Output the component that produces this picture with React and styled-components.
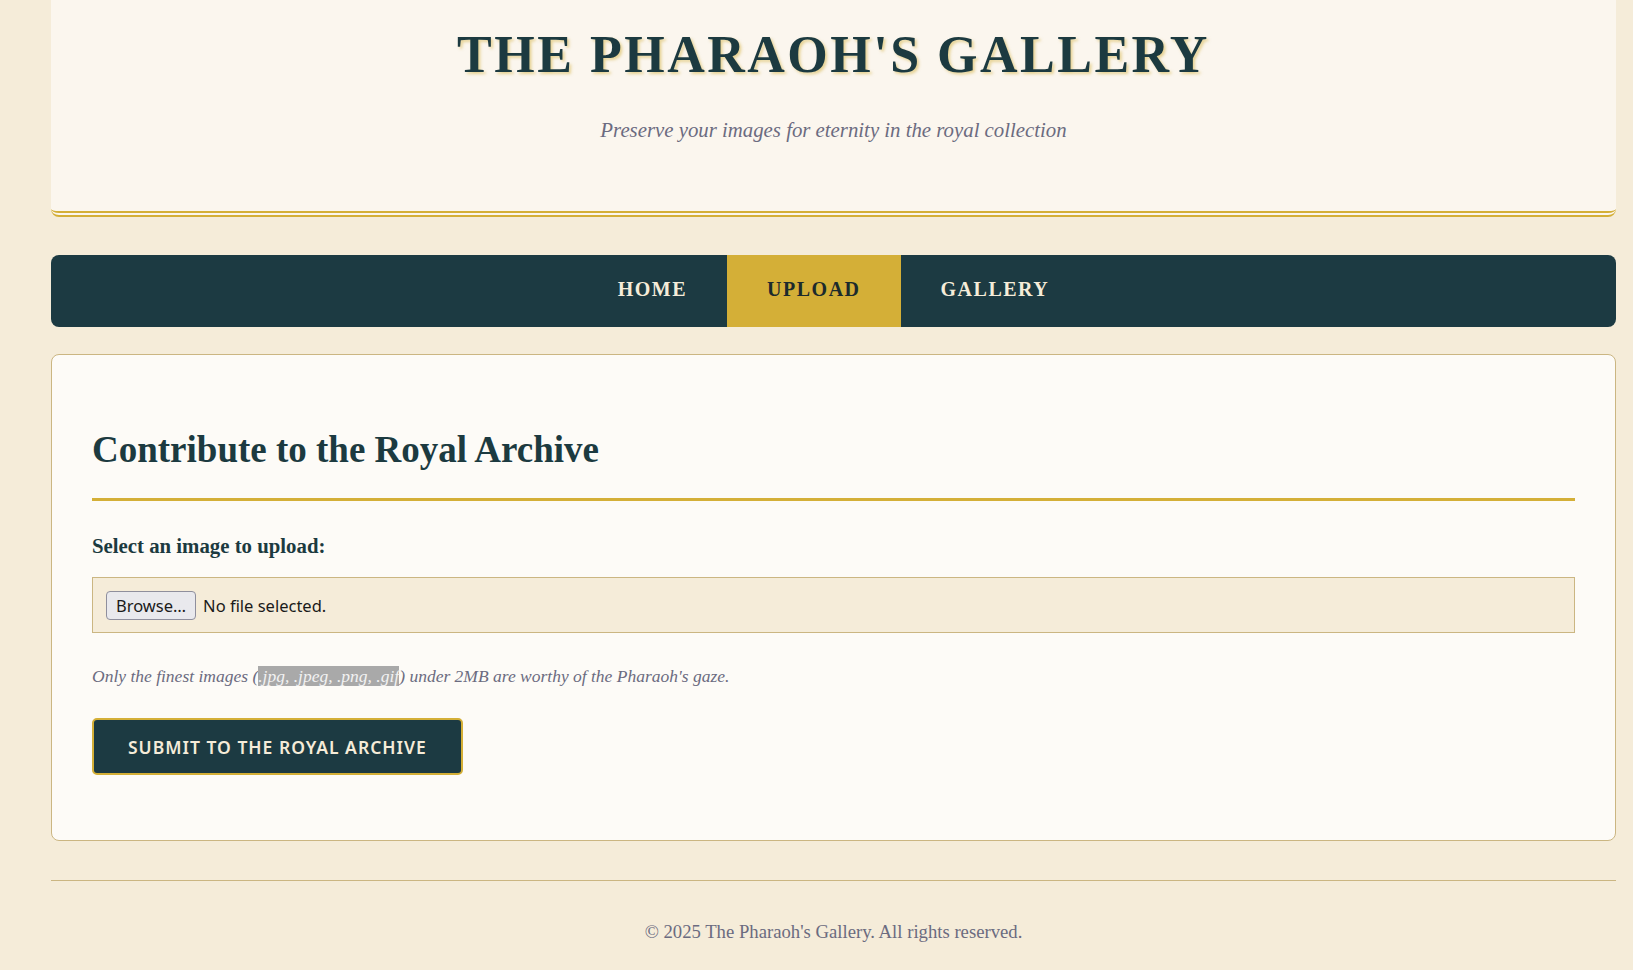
import React from 'react';
import styled, { createGlobalStyle } from 'styled-components';

const GlobalStyle = createGlobalStyle`
  body {
    margin: 0;
    background: #f5ecd9;
    font-family: "Liberation Serif", "Times New Roman", serif;
    color: #1c3a40;
  }
`;

const Page = styled.div`
  margin: 0 17px 0 51px;
`;

const Header = styled.header`
  background: #fbf6ee;
  text-align: center;
  padding: 25px 20px 69px;
  border-bottom: 6px double #d4af37;
  border-radius: 0 0 8px 8px;
`;

const Title = styled.h1`
  margin: 0;
  font-size: 52px;
  line-height: 60px;
  font-weight: 700;
  letter-spacing: 2.5px;
  color: #1c3a40;
  text-shadow: 2px 2px 3px rgba(212, 175, 55, 0.5);
`;

const Subtitle = styled.p`
  margin: 33px 0 0;
  font-size: 20.8px;
  line-height: 24px;
  font-style: italic;
  color: #6b6b80;
`;

const Nav = styled.nav`
  margin-top: 38px;
  background: #1c3a42;
  border-radius: 8px;
  display: flex;
  justify-content: center;
`;

const NavItem = styled.a`
  display: block;
  padding: 23px 40px 27px;
  font-size: 20px;
  line-height: 22px;
  font-weight: 700;
  letter-spacing: 1.5px;
  text-transform: uppercase;
  text-decoration: none;
  cursor: pointer;
  color: ${props => (props.active ? '#1c2a2c' : '#f5ecd9')};
  background: ${props => (props.active ? '#d4af37' : 'transparent')};
`;

const Card = styled.main`
  margin-top: 27px;
  background: #fdfbf7;
  border: 1px solid #cbb682;
  border-radius: 8px;
  padding: 40px;
`;

const Heading = styled.h2`
  margin: 33px 0 0;
  font-size: 37px;
  line-height: 43px;
  font-weight: 700;
  color: #1c3a40;
  padding-bottom: 27px;
  border-bottom: 3px solid #d4af37;
`;

const Form = styled.form`
  margin-top: 33px;
  margin-bottom: 25px;
`;

const Label = styled.label`
  display: block;
  font-size: 20.8px;
  line-height: 24px;
  font-weight: 700;
  color: #1c3a40;
  margin-bottom: 19px;
`;

const FileBox = styled.div`
  box-sizing: border-box;
  height: 56px;
  display: flex;
  align-items: center;
  gap: 7px;
  padding: 0 13px;
  background: #f5ecd9;
  border: 1px solid #cbb682;
  font-family: "Noto Sans", sans-serif;
  font-size: 16.5px;
  color: #1a1a1a;
`;

const BrowseButton = styled.button`
  box-sizing: border-box;
  height: 29px;
  padding: 0 9px;
  font-family: "Noto Sans", sans-serif;
  font-size: 16.5px;
  color: #1a1a1a;
  background: #e9e9ed;
  border: 1px solid #8f8f9d;
  border-radius: 4px;
`;

const Note = styled.p`
  margin: 33px 0 0;
  font-size: 17.5px;
  line-height: 20px;
  font-style: italic;
  color: #6b6b80;
`;

const Selected = styled.span`
  background: #a9a9a9;
  color: #f2f2f2;
`;

const Submit = styled.button`
  margin-top: 32px;
  box-sizing: border-box;
  height: 57px;
  padding: 0 34px;
  background: #1c3a42;
  color: #f5ecd9;
  border: 2px solid #d4af37;
  border-radius: 5px;
  font-family: "Noto Sans", sans-serif;
  font-size: 17.5px;
  font-weight: 600;
  letter-spacing: 1px;
  text-transform: uppercase;
  cursor: pointer;
`;

const Footer = styled.footer`
  margin-top: 39px;
  border-top: 1px solid #cbb682;
  padding: 40px 0 27px;
  text-align: center;
  font-size: 18.7px;
  line-height: 22px;
  color: #6b6b80;
`;

const App = () => {
  return (
    <>
      <GlobalStyle />
      <Page>
        <Header>
          <Title>THE PHARAOH'S GALLERY</Title>
          <Subtitle>Preserve your images for eternity in the royal collection</Subtitle>
        </Header>
        <Nav>
          <NavItem>Home</NavItem>
          <NavItem active>Upload</NavItem>
          <NavItem>Gallery</NavItem>
        </Nav>
        <Card>
          <Heading>Contribute to the Royal Archive</Heading>
          <Form onSubmit={e => e.preventDefault()}>
            <Label>Select an image to upload:</Label>
            <FileBox>
              <BrowseButton type="button">Browse…</BrowseButton>
              <span>No file selected.</span>
            </FileBox>
            <Note>
              Only the finest images (<Selected>.jpg, .jpeg, .png, .gif</Selected>) under 2MB are worthy of the Pharaoh's gaze.
            </Note>
            <Submit type="submit">Submit to the Royal Archive</Submit>
          </Form>
        </Card>
        <Footer>© 2025 The Pharaoh's Gallery. All rights reserved.</Footer>
      </Page>
    </>
  );
};

export default App;
